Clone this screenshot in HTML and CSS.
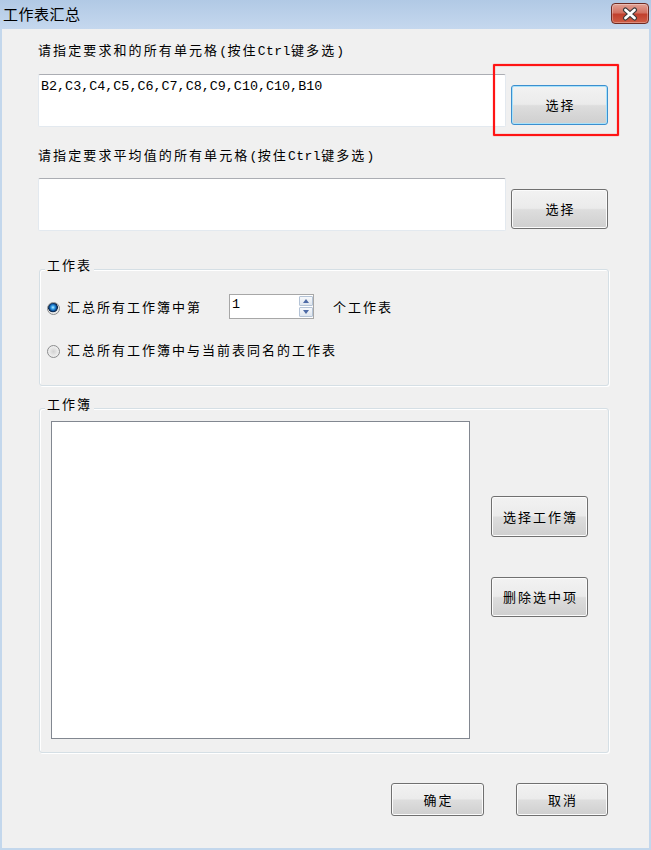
FILE: index.html
```html
<!DOCTYPE html>
<html lang="zh-CN">
<head>
    <meta charset="UTF-8">
    <title>工作表汇总</title>
    <link rel="stylesheet" href="styles.css">
</head>
<body>
<div class="window">
    <div class="titlebar">
        <span class="title">工作表汇总</span>
        <span class="close">
            <svg width="16" height="14" viewBox="0 0 16 14">
                <path d="M3.5 3L12.5 11M12.5 3L3.5 11" stroke="#3a3a3a" stroke-width="5" stroke-linecap="round"/>
                <path d="M3.5 3L12.5 11M12.5 3L3.5 11" stroke="#fff" stroke-width="2.8" stroke-linecap="round"/>
            </svg>
        </span>
    </div>

    <div class="content">
        <div class="label">请指定要求和的所有单元格<span class="en">(</span>按住<span class="en">Ctrl</span>键多选<span class="en">)</span></div>
        <div class="pick-row first">
            <div class="textbox">B2,C3,C4,C5,C6,C7,C8,C9,C10,C10,B10</div>
            <button class="btn btn-pick btn-focus">选择</button>
            <!-- red annotation frame -->
            <div class="highlight"></div>
        </div>

        <div class="label second">请指定要求平均值的所有单元格<span class="en">(</span>按住<span class="en">Ctrl</span>键多选<span class="en">)</span></div>
        <div class="pick-row">
            <div class="textbox"></div>
            <button class="btn btn-pick">选择</button>
        </div>

        <fieldset class="group sheets">
            <legend>工作表</legend>
            <div class="opt">
                <span class="radio on"></span>
                <span>汇总所有工作簿中第</span>
                <div class="spin">
                    <span class="spin-val">1</span>
                    <div class="spin-btns">
                        <span class="spin-btn"><i class="arrow up"></i></span>
                        <span class="spin-btn"><i class="arrow down"></i></span>
                    </div>
                </div>
                <span class="after-spin">个工作表</span>
            </div>
            <div class="opt second">
                <span class="radio"></span>
                <span>汇总所有工作簿中与当前表同名的工作表</span>
            </div>
        </fieldset>

        <fieldset class="group books">
            <legend>工作簿</legend>
            <div class="wb-row">
                <div class="listbox"></div>
                <div class="wb-side">
                    <button class="btn btn-wb first">选择工作簿</button>
                    <button class="btn btn-wb">删除选中项</button>
                </div>
            </div>
        </fieldset>

        <div class="footer">
            <button class="btn btn-ok">确定</button>
            <button class="btn btn-cancel">取消</button>
        </div>
    </div>
</div>
</body>
</html>
```

FILE: styles.css
```css
* {
    box-sizing: border-box;
}

body {
    margin: 0;
    background: #f0f0f0;
    font-family: "Liberation Mono", "Noto Sans CJK SC", monospace;
    color: #000;
}

.window {
    width: 651px;
    height: 850px;
    display: flex;
    flex-direction: column;
}

/* Title bar */
.titlebar {
    height: 29px;
    flex: none;
    display: flex;
    justify-content: space-between;
    align-items: flex-start;
    background: linear-gradient(#b1c9e5, #c5d8ee);
}

.title {
    font-family: "Noto Sans CJK SC", sans-serif;
    font-size: 15px;
    line-height: 18px;
    letter-spacing: 0.5px;
    margin: 5px 0 0 3px;
}

.close {
    width: 38px;
    height: 21px;
    margin: 3px 2px 0 0;
    border: 1px solid #6e2b22;
    border-radius: 4px;
    background: linear-gradient(#e2a295 0%, #d27262 45%, #c1402d 55%, #cf5d45 100%);
    box-shadow: inset 0 0 0 1px rgba(255, 255, 255, .3);
    display: flex;
    align-items: center;
    justify-content: center;
}

/* Client area */
.content {
    flex: 1;
    border: 2px solid #c3d7ec;
    border-top: none;
    padding: 13px 40px 0 36px;
}

.label {
    font-size: 13px;
    line-height: 20px;
    letter-spacing: 2.1px;
}

.label .en {
    letter-spacing: 0.5px;
}

.label.second {
    margin-top: 20px;
}

.pick-row {
    position: relative;
    display: flex;
    align-items: flex-start;
    gap: 5px;
    margin-top: 11px;
}

.pick-row.first {
    margin-top: 12px;
}

.textbox {
    width: 468px;
    height: 53px;
    flex: none;
    background: #fff;
    border: 1px solid #e3e9ef;
    border-top-color: #abadb3;
    border-radius: 2px;
    padding: 3px 2px;
    font-size: 13.4px;
    line-height: 17px;
}

/* Buttons */
.btn {
    height: 40px;
    padding: 0 0 0 2px;
    border: 1px solid #707070;
    border-radius: 3px;
    background: linear-gradient(#f2f2f2 0%, #ebebeb 48%, #dddddd 52%, #cfcfcf 100%);
    box-shadow: inset 0 0 0 1px #fbfbfb;
    font-family: "Noto Sans CJK SC", sans-serif;
    font-size: 13px;
    line-height: 16px;
    letter-spacing: 2px;
    color: #000;
}

.btn-pick {
    width: 97px;
    margin-top: 11px;
}

.btn-focus {
    border-color: #3b8fcf;
    box-shadow: inset 0 0 0 1px #a9e2fa;
}

.highlight {
    position: absolute;
    left: 455px;
    top: -10px;
    width: 126px;
    height: 72px;
    border: 2px solid #ff1414;
    border-radius: 1px;
    box-shadow: 0 0 1px #ff0000, inset 0 0 1px #ff0000;
    pointer-events: none;
}

/* Group boxes */
.group {
    margin: 0 0 0 1px;
    min-width: 0;
    border: 1px solid #d5dfe5;
    border-radius: 3px;
    box-shadow: inset 1px 1px 0 #fff, 1px 1px 0 #fff;
}

.group legend {
    margin-left: -2px;
    padding: 0 2px 4px;
    background: #f0f0f0;
    font-size: 13px;
    line-height: 16px;
    letter-spacing: 2px;
}

.sheets {
    margin-top: 28px;
    padding: 15px 7px 23px;
}

.books {
    margin-top: 12px;
    padding: 3px 7px 13px;
}

.opt {
    display: flex;
    align-items: center;
    height: 25px;
    font-size: 13px;
    letter-spacing: 2px;
}

.opt.second {
    margin-top: 18px;
}

.radio {
    width: 13px;
    height: 13px;
    flex: none;
    margin: 4px 7px 0 0;
    border: 1px solid #8b8c8d;
    border-radius: 50%;
    background: radial-gradient(circle at 50% 50%, #d2d2d2 0, #e6e6e6 45%, #fafafa 100%);
}

.radio.on {
    background: radial-gradient(circle at 45% 40%, #c8eeff 0, #44aef0 1.5px, #1668b8 3px, #0c3568 4px, #0c2849 4.6px, #e4e4e4 5.2px, #f8f8f8 100%);
}

.spin {
    width: 85px;
    height: 25px;
    flex: none;
    margin-left: 27px;
    display: flex;
    justify-content: space-between;
    padding: 1px 0 1px 2px;
    background: #fff;
    border: 1px solid #a7a7a7;
    letter-spacing: 0;
}

.spin-val {
    font-size: 13.4px;
    line-height: 17px;
}

.spin-btns {
    width: 14px;
    display: flex;
    flex-direction: column;
    gap: 1px;
}

.spin-btn {
    flex: 1;
    display: flex;
    align-items: center;
    justify-content: center;
    border: 1px solid #b4c3d6;
    border-radius: 1px;
    background: linear-gradient(#f6f8fb, #dfe6ef);
}

.arrow {
    width: 0;
    height: 0;
    border-left: 3.5px solid transparent;
    border-right: 3.5px solid transparent;
}

.arrow.up {
    border-bottom: 4px solid #4d6aa6;
}

.arrow.down {
    border-top: 4px solid #4d6aa6;
}

.after-spin {
    margin-left: 19px;
}

/* Workbook list */
.wb-row {
    display: flex;
}

.listbox {
    width: 419px;
    height: 318px;
    flex: none;
    margin-left: 4px;
    background: #fff;
    border: 1px solid #828790;
}

.wb-side {
    display: flex;
    flex-direction: column;
    margin-left: 21px;
}

.btn-wb {
    width: 97px;
    margin-top: 40px;
}

.btn-wb.first {
    height: 41px;
    margin-top: 75px;
}

/* Dialog buttons */
.footer {
    display: flex;
    justify-content: flex-end;
    gap: 32px;
    margin-top: 30px;
    padding-right: 1px;
}

.btn-ok {
    width: 93px;
    height: 33px;
}

.btn-cancel {
    width: 92px;
    height: 33px;
}
```
